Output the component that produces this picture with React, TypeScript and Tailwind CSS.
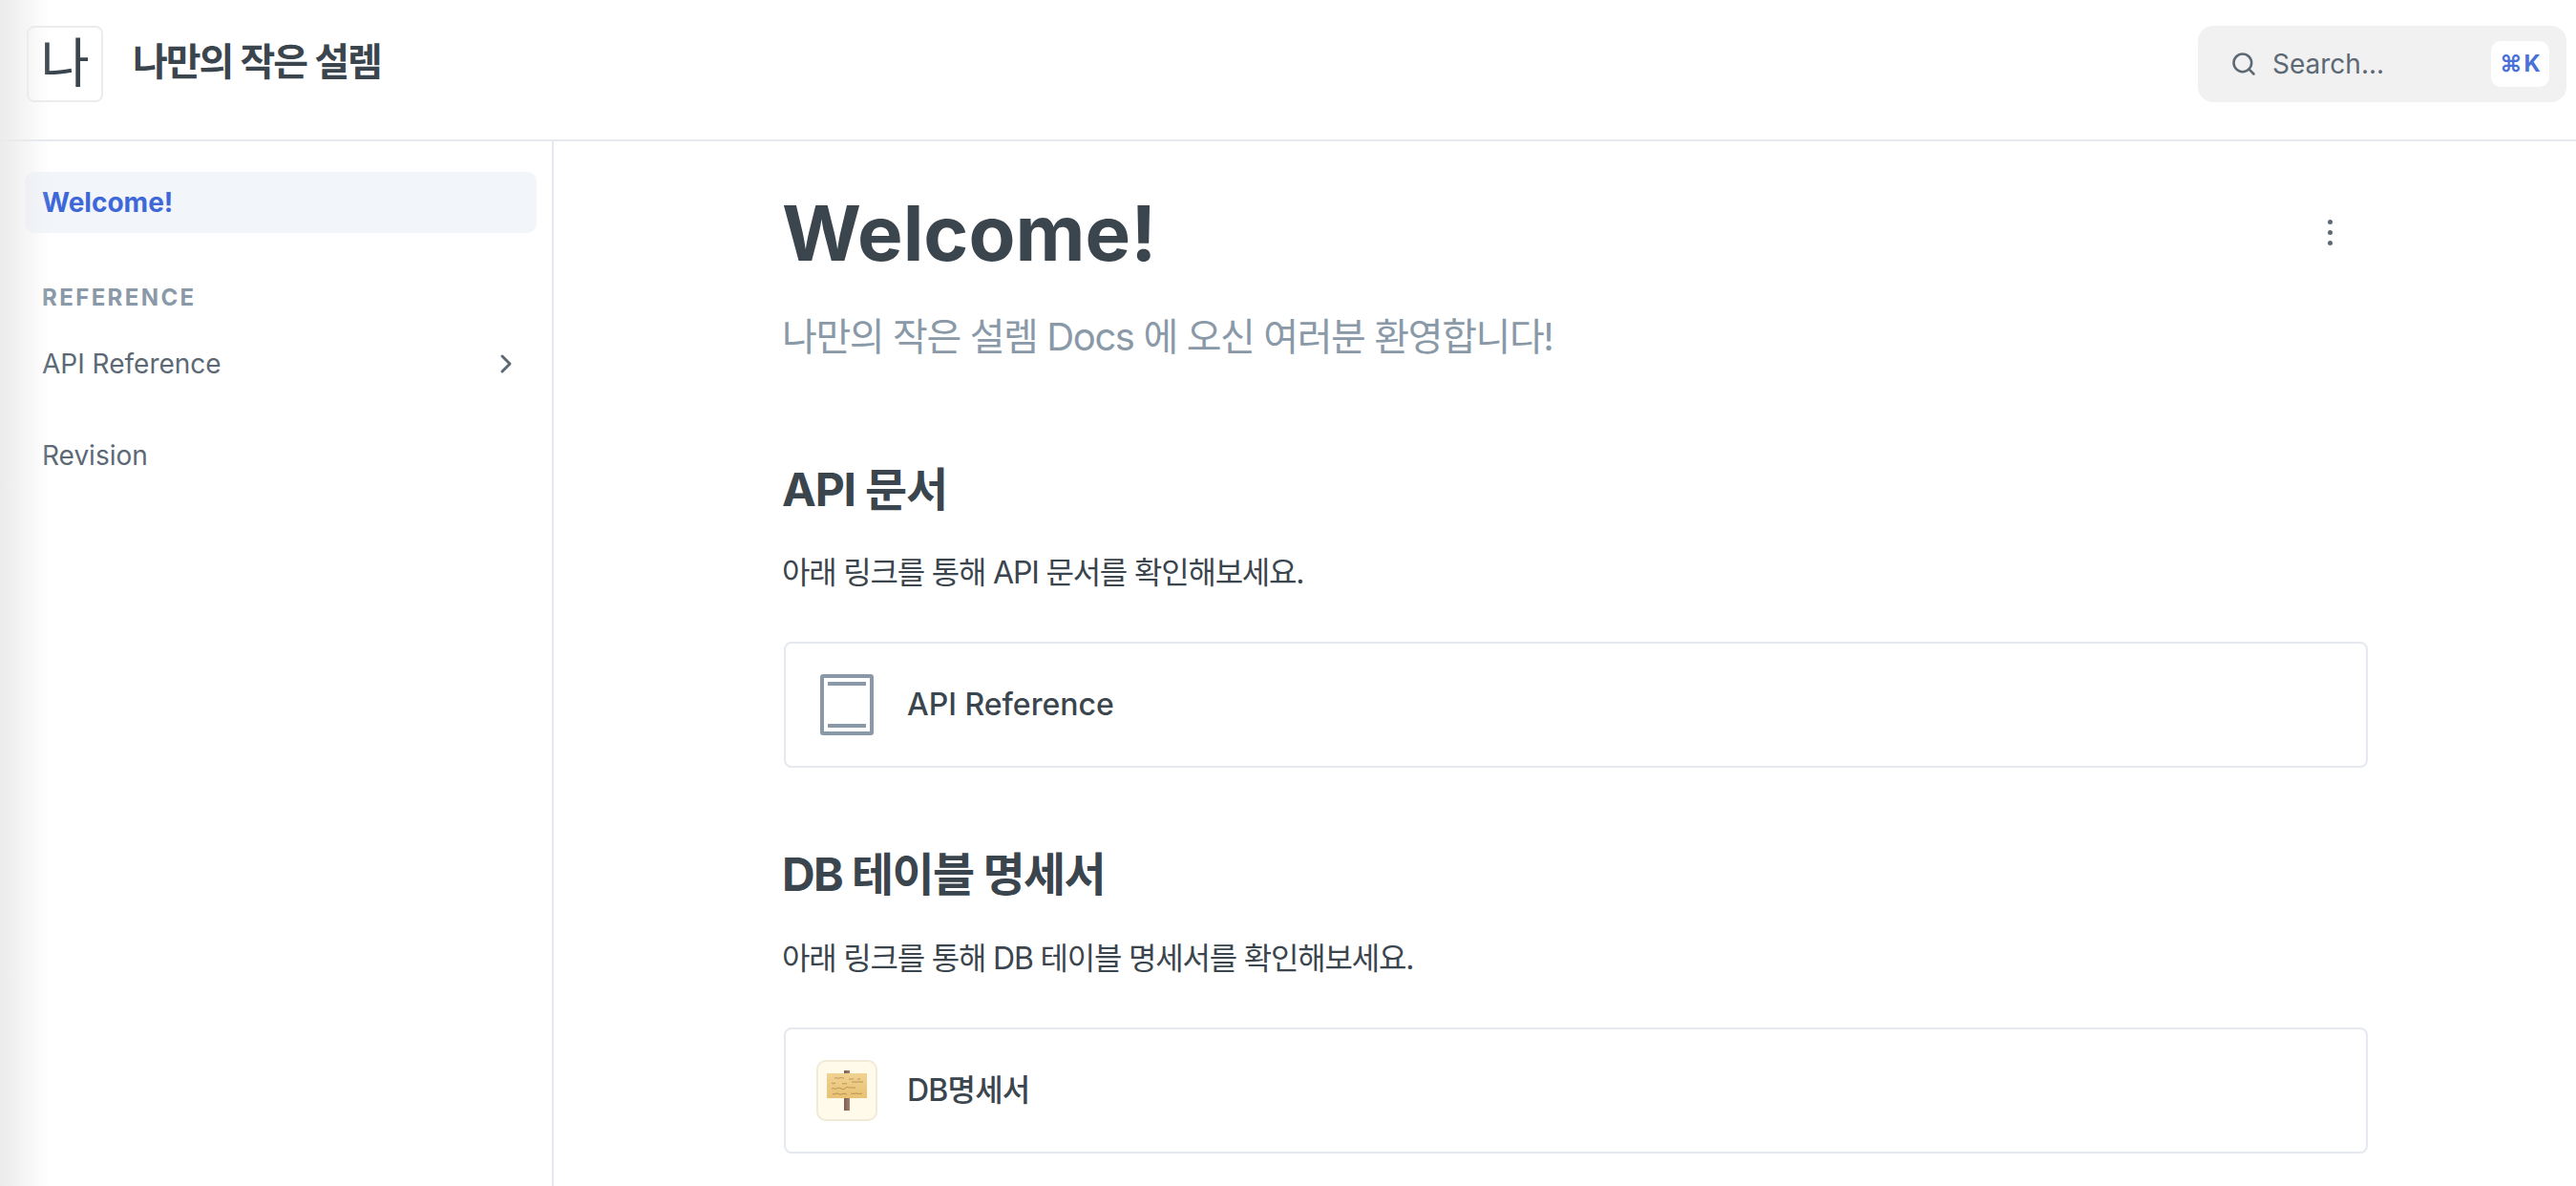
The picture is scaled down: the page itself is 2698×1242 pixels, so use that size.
import React from "react";
import { ChevronRight, Search } from "lucide-react";

const fontStack = "font-['Inter','Noto_Sans_CJK_KR',sans-serif]";

const BookIcon = () => (
  <svg width="56" height="64" viewBox="0 0 56 64" fill="none">
    <rect x="2" y="2" width="52" height="60" rx="1" stroke="#8a99a8" strokeWidth="4" />
    <rect x="8" y="8" width="40" height="4" fill="#8a99a8" />
    <rect x="8" y="52" width="40" height="4" fill="#8a99a8" />
  </svg>
);

const SignIcon = () => (
  <div className="flex h-[64px] w-[64px] items-center justify-center rounded-[10px] border-2 border-[#f1ead6] bg-[#fffaea]">
    <svg width="44" height="44" viewBox="0 0 44 44" fill="none">
      <defs>
        <linearGradient id="board" x1="0" y1="0" x2="0" y2="1">
          <stop offset="0" stopColor="#f0d292" />
          <stop offset="1" stopColor="#e8c174" />
        </linearGradient>
        <linearGradient id="post" x1="0" y1="0" x2="1" y2="0">
          <stop offset="0" stopColor="#7d5c4b" />
          <stop offset="1" stopColor="#a08272" />
        </linearGradient>
      </defs>
      <rect x="19" y="1" width="6" height="42" fill="url(#post)" />
      <rect x="1" y="4" width="42" height="26" fill="url(#board)" />
      <g stroke="#96712f" strokeWidth="0.6" fill="none">
        <path d="M9 9c2-1 3 1 5 0s3 0 5 0M24 10c2 1 3-1 5 0M33 10h3" />
        <path d="M6 14c1 1 3 1 4 0M17 15c2 0 3-1 5 0M27 13h12" />
        <path d="M6 20c2-1 3 1 5 0s3-1 5 0 3 1 5-1 3 1 5 0 3 1 5 0" />
        <path d="M7 26c2 0 3-1 5-1s2 2 4 1 4-1 6 0M26 25c2 1 4 0 6 0s3 1 6 0" />
      </g>
    </svg>
  </div>
);

const LinkCard = ({ icon, children, className }: { icon: React.ReactNode; children: React.ReactNode; className: string }) => (
  <div className={`flex h-[132px] items-center rounded-[8px] border-2 border-[#e5e9ef] ${className}`}>
    {icon}
    {children}
  </div>
);

export default function App() {
  return (
    <div className={`relative h-screen overflow-hidden bg-white ${fontStack}`}>
      {/* left edge shade */}
      <div className="pointer-events-none absolute inset-y-0 left-0 w-[52px] bg-gradient-to-r from-[#ebebeb] to-transparent" />

      {/* ================ header ================ */}
      <header className="flex h-[148px] items-center justify-between border-b-2 border-[#e5e9ef] pr-[10px] pb-[12px] pl-[28px]">
        <div className="flex items-center gap-[31px]">
          <div className="flex h-[80px] w-[80px] items-center justify-center rounded-[8px] border-2 border-[#ececec] bg-white pb-[2px] text-[56px] leading-none text-[#3b454e]">
            나
          </div>
          <span className="mt-[-4px] text-[40px] font-semibold tracking-[-2px] text-[#3b454e]">나만의 작은 설렘</span>
        </div>
        <div className="flex h-[80px] w-[386px] items-center rounded-[16px] bg-[#f1f1f1] pr-[18px] pl-[34px]">
          <Search size={28} strokeWidth={2.2} className="text-[#5c6975]" />
          <span className="ml-[16px] flex-1 text-[28px] text-[#5c6975]">Search...</span>
          <span className="flex h-[48px] w-[61px] items-center justify-center gap-[2px] rounded-[10px] bg-white text-[24px] font-bold text-[#4a70d9]">
            <span>⌘</span>
            <span>K</span>
          </span>
        </div>
      </header>

      <div className="flex">
        {/* ================ sidebar ================ */}
        <aside className="h-[1094px] w-[580px] shrink-0 border-r-2 border-[#e5e9ef] pt-[32px] pr-[16px] pl-[26px]">
          <div className="flex h-[64px] items-center rounded-[10px] bg-[#f2f5fa] px-[18px] text-[28px] font-bold text-[#3e68d8]">
            Welcome!
          </div>
          <div className="mt-[50px] px-[18px] text-[24px] font-bold tracking-[2.4px] text-[#8a99a8]">REFERENCE</div>
          <div className="mt-[19px] flex h-[64px] items-center justify-between pr-[16px] pl-[18px] text-[28px] text-[#5c6975]">
            <span>API Reference</span>
            <ChevronRight size={32} strokeWidth={2.2} />
          </div>
          <div className="mt-[32px] flex h-[64px] items-center px-[18px] text-[28px] text-[#5c6975]">Revision</div>
        </aside>

        {/* ================ main ================ */}
        <main className="w-[1659px] pt-[40px] pl-[241px] box-content">
          <div className="flex items-start justify-between">
            <h1 className="ml-[-2px] text-[80px] leading-[112px] font-bold text-[#3b454e]">Welcome!</h1>
            <div className="mt-[42px] mr-[37px] flex flex-col gap-[6px]">
              <span className="h-[5px] w-[5px] rounded-full bg-[#5c6975]" />
              <span className="h-[5px] w-[5px] rounded-full bg-[#5c6975]" />
              <span className="h-[5px] w-[5px] rounded-full bg-[#5c6975]" />
            </div>
          </div>
          <p className="mt-[25px] ml-[-2px] text-[40px] leading-[56px] tracking-[-1.4px] text-[#8a99a8]">
            나만의 작은 설렘 Docs 에 오신 여러분 환영합니다!
          </p>

          <h2 className="mt-[100px] ml-[-2px] text-[48px] leading-[64px] font-bold tracking-[-1.2px] text-[#3b454e]">API 문서</h2>
          <p className="mt-[31px] ml-[-2px] text-[32px] leading-[48px] tracking-[-1.2px] text-[#3b454e]">아래 링크를 통해 API 문서를 확인해보세요.</p>
          <div className="mt-[48px]">
            <LinkCard icon={<BookIcon />} className="gap-[35px] pl-[36px]">
              <span className="text-[32px] font-medium text-[#3b454e]">API Reference</span>
            </LinkCard>
          </div>

          <h2 className="mt-[80px] ml-[-2px] text-[48px] leading-[64px] font-bold tracking-[-1.6px] text-[#3b454e]">DB 테이블 명세서</h2>
          <p className="mt-[32px] ml-[-2px] text-[32px] leading-[48px] tracking-[-1.2px] text-[#3b454e]">아래 링크를 통해 DB 테이블 명세서를 확인해보세요.</p>
          <div className="mt-[48px]">
            <LinkCard icon={<SignIcon />} className="gap-[31px] pl-[32px]">
              <span className="text-[32px] font-medium tracking-[-0.8px] text-[#3b454e]">DB명세서</span>
            </LinkCard>
          </div>
        </main>
      </div>
    </div>
  );
}
